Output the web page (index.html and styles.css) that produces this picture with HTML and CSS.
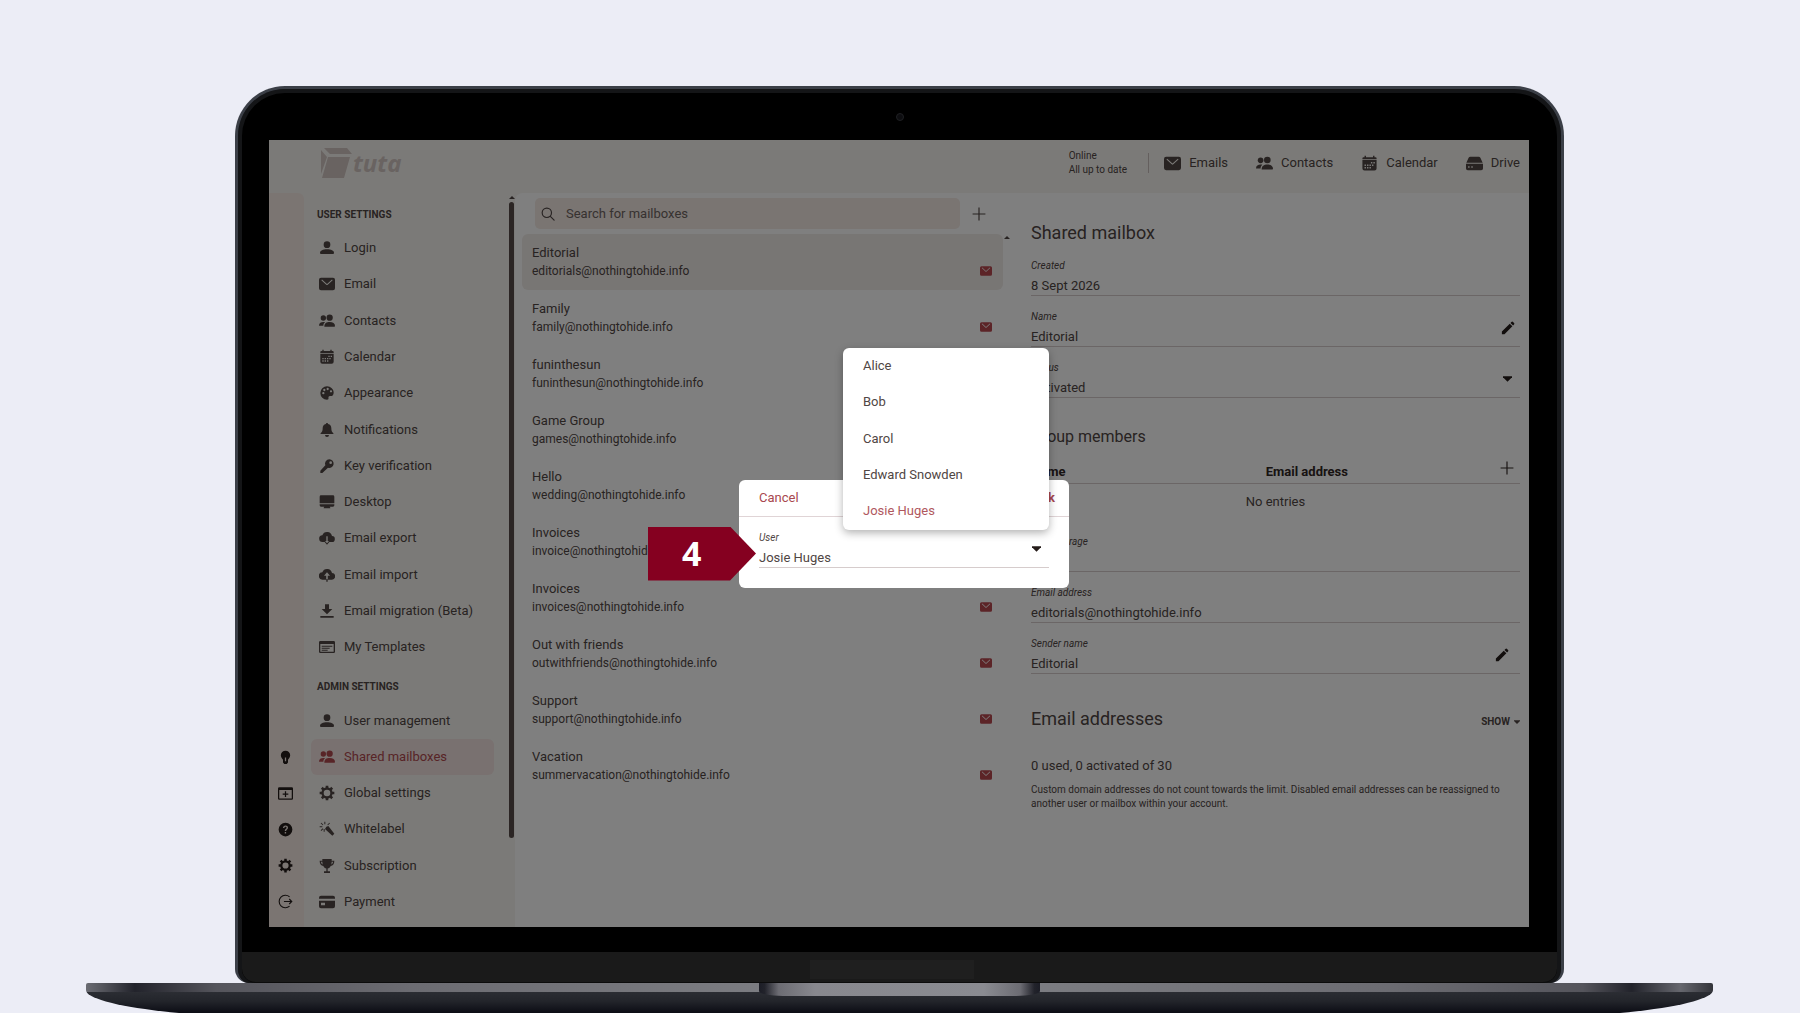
FILE: index.html
```
<!DOCTYPE html>
<html lang="en">
<head>
    <meta charset="utf-8">
    <title>Shared mailboxes</title>
    <link rel="stylesheet" href="styles.css">
</head>
<body>
    <!-- icon set -->
    <svg class="icon-defs" aria-hidden="true">
        <symbol id="i-person" viewBox="0 0 24 24"><circle cx="12" cy="7" r="5"/><path d="M1.500 19.500c0-3.500 4.500-5.500 10.500-5.500s10.500 2 10.500 5.500c0 1-.5 1.500-1.500 1.500H3c-1 0-1.500-.5-1.500-1.500z"/></symbol>
        <symbol id="i-mail" viewBox="0 0 24 24"><path fill-rule="evenodd" d="M3 2.500h18a3 3 0 0 1 3 3v13a3 3 0 0 1-3 3H3a3 3 0 0 1-3-3v-13a3 3 0 0 1 3-3zM3.500 6.200l7.400 7a1.700 1.700 0 0 0 2.200 0l7.400-7-1-1L12 12 4.500 5.200z"/></symbol>
        <symbol id="i-people" viewBox="0 0 24 24"><circle cx="6.500" cy="7.500" r="4"/><path d="M0 19c0-4 3-5.500 6.500-5.500 1 0 2 .1 2.600.4C7.200 15.300 6.600 17 6.500 19z"/><circle cx="16" cy="7" r="4.700"/><path d="M8 20.500c0-5 3-7 8-7s8 2 8 6c0 .7-.4 1-1 1z"/></symbol>
        <symbol id="i-calendar" viewBox="0 0 24 24"><path fill-rule="evenodd" d="M5 3V1h2v2h10V1h2v2h1.500A1.500 1.500 0 0 1 22 4.500V6H2V4.500A1.500 1.500 0 0 1 3.500 3zM2 7h20V19a3 3 0 0 1-3 3H5a3 3 0 0 1-3-3zM14 10v2h2v-2zm3.500 0v2h2v-2zM5 13.500v2h2v-2zm3.500 0v2h2v-2zm3.500 0v2h2v-2zm3.500 0v2h2v-2zM5 17v2h2v-2zm3.500 0v2h2v-2zm3.500 0v2h2v-2z"/></symbol>
        <symbol id="i-palette" viewBox="0 0 24 24"><path fill-rule="evenodd" d="M12 2a10 10 0 0 0 0 20c2 0 2.500-1 2.200-2.500-.3-2 .8-3.200 2.600-3 2 .3 4.500.5 5.200-4.500C22.300 6.500 17.500 2 12 2zM6.500 10.500a1.700 1.700 0 1 1 0 3.400 1.700 1.700 0 0 1 0-3.400zM8 5.800A1.700 1.700 0 1 1 8 9.200a1.700 1.700 0 0 1 0-3.400zm5-1.500a1.700 1.700 0 1 1 0 3.400 1.700 1.700 0 0 1 0-3.400zm5 3.500a1.700 1.700 0 1 1 0 3.400 1.700 1.700 0 0 1 0-3.400z"/></symbol>
        <symbol id="i-bell" viewBox="0 0 24 24"><path d="M12 1.500c-1 0-1.600.7-1.600 1.600C7 3.800 5.500 6.500 5.500 9.500c0 4-1 5.500-2.800 7-.7.600-.4 1.500.5 1.500h17.600c.9 0 1.200-.9.500-1.500-1.800-1.500-2.800-3-2.800-7 0-3-1.500-5.700-4.900-6.400 0-.9-.6-1.600-1.600-1.600zM9 19.500h6a3 3 0 0 1-6 0z"/></symbol>
        <symbol id="i-key" viewBox="0 0 24 24"><path fill-rule="evenodd" d="M15.500 2a6.500 6.500 0 1 1-2 12.700L5 22.500H2V19l7.500-8A6.500 6.500 0 0 1 15.500 2zm2 3a2 2 0 1 0 0 4 2 2 0 0 0 0-4z"/></symbol>
        <symbol id="i-desktop" viewBox="0 0 24 24"><path d="M3 2h18a2 2 0 0 1 2 2v10H1V4a2 2 0 0 1 2-2zM1 15.500h22V17a2 2 0 0 1-2 2h-5l1 1.500v1H7v-1L8 19H3a2 2 0 0 1-2-2z"/></symbol>
        <symbol id="i-cloud-down" viewBox="0 0 24 24"><path fill-rule="evenodd" d="M19.500 9A7.500 7.500 0 0 0 5 8a5 5 0 0 0 .5 10h3l3.500 4 3.500-4H19a4.500 4.500 0 0 0 .5-9zM11 9.500h2v7h2L12 20l-3-3.500h2z"/></symbol>
        <symbol id="i-cloud-up" viewBox="0 0 24 24"><path fill-rule="evenodd" d="M19.500 9A7.500 7.500 0 0 0 5 8a5 5 0 0 0 .5 11h5.300v-6H7.500L12 8l4.500 5h-3.300v6H19a5 5 0 0 0 .5-10z"/><path d="M11 18h2v4h-2z"/></symbol>
        <symbol id="i-download" viewBox="0 0 24 24"><path d="M9 2h6v7h5l-8 8-8-8h5zM2 19.500h20V22H2z"/></symbol>
        <symbol id="i-template" viewBox="0 0 24 24"><path fill-rule="evenodd" d="M2 3h20a2 2 0 0 1 2 2v14a2 2 0 0 1-2 2H2a2 2 0 0 1-2-2V5a2 2 0 0 1 2-2zm0 4.500V19h20V7.500z"/><path d="M4 10h16v1.500H4zM4 13h12v1.500H4zM4 16h9v1.500H4z"/></symbol>
        <symbol id="i-gear" viewBox="0 0 24 24"><circle cx="12" cy="12" r="6.700" fill="none" stroke="currentColor" stroke-width="3.500"/><path d="M10 1h4v4h-4zM10 19h4v4h-4zM1 10h4v4H1zM19 10h4v4h-4zM5.600 2.800l2.800 2.800-2.800 2.800-2.800-2.800zM18.400 2.800l2.800 2.800-2.800 2.800-2.800-2.800zM5.600 15.600l2.800 2.800-2.800 2.800-2.800-2.800zM18.400 15.600l2.800 2.800-2.800 2.800-2.800-2.800z"/></symbol>
        <symbol id="i-wand" viewBox="0 0 24 24"><path d="M11 8.500l3-1 9 11.500-3 3L9 12zM8 1h1.500v4H8zM1 8h4v1.500H1zM2.500 3.500l1-1 3 3-1 1zM12.500 5.500l3-3 1 1-3 3zM2.500 14l3-3 1 1-3 3zM7 12h1.500v4H7z"/></symbol>
        <symbol id="i-trophy" viewBox="0 0 24 24"><path fill-rule="evenodd" d="M5 1.500h14V4h4c0 5-2 7.500-5.500 8-1 2-2.500 3.300-4.500 3.700V20h3.500v2.500h-9V20H11v-4.300c-2-.4-3.500-1.700-4.500-3.700C3 11.500 1 9 1 4h4zM3 5.800c.2 2 1 3.300 2.600 3.900C5.200 8.500 5 7.300 5 5.800zm18 0h-2c0 1.500-.2 2.700-.6 3.900 1.600-.6 2.400-1.900 2.600-3.900z"/></symbol>
        <symbol id="i-card" viewBox="0 0 24 24"><path fill-rule="evenodd" d="M3 2.500h18a3 3 0 0 1 3 3V7H0V5.500a3 3 0 0 1 3-3zM0 10h24v8.500a3 3 0 0 1-3 3H3a3 3 0 0 1-3-3zm3 3v4h6v-4z"/></symbol>
        <symbol id="i-bulb" viewBox="0 0 24 24"><path fill-rule="evenodd" d="M12 1a7.500 7.500 0 0 0-7.500 7.500c0 3.300 2 4.700 3.500 7V20l2 2.500h4l2-2.500v-4.500c1.500-2.300 3.500-3.700 3.500-7A7.500 7.500 0 0 0 12 1zM11 12h2v6h-2z"/></symbol>
        <symbol id="i-window-plus" viewBox="0 0 24 24"><path fill-rule="evenodd" d="M2 2h20a2 2 0 0 1 2 2v16a2 2 0 0 1-2 2H2a2 2 0 0 1-2-2V4a2 2 0 0 1 2-2zm0 4.500V20h20V6.500z"/><path d="M11 8.500h2V12h3.500v2H13v3.500h-2V14H7.500v-2H11z"/></symbol>
        <symbol id="i-help" viewBox="0 0 24 24"><path fill-rule="evenodd" d="M12 1a11 11 0 1 0 0 22 11 11 0 0 0 0-22zM8 9.500C8 7 9.700 5.500 12 5.500s4 1.400 4 3.700c0 3-3 3.200-3 5.300h-2.200c0-3.300 2.900-3.500 2.900-5.200 0-1-.7-1.600-1.700-1.600s-1.800.7-1.800 1.800zm2.800 6.500H13v2.300h-2.200z"/></symbol>
        <symbol id="i-logout" viewBox="0 0 24 24"><path fill="none" stroke="currentColor" stroke-width="1.800" d="M18.500 4.500a10 10 0 1 0 0 15M9.500 12H22M18 8l4 4-4 4"/></symbol>
        <symbol id="i-search" viewBox="0 0 24 24"><path fill="none" stroke="currentColor" stroke-width="2" stroke-linecap="round" d="M10 2a8 8 0 1 1 0 16 8 8 0 0 1 0-16zM16 16l6.500 6.500"/></symbol>
        <symbol id="i-plus" viewBox="0 0 24 24"><path d="M11 1h2v10h10v2H13v10h-2V13H1v-2h10z"/></symbol>
        <symbol id="i-pencil" viewBox="0 0 24 24"><path d="M1.500 18L15 4.500 19.500 9 6 22.500H1.500zM16.200 3.300l1.600-1.600a2 2 0 0 1 2.900 0l1.600 1.600a2 2 0 0 1 0 2.900l-1.600 1.600z"/></symbol>
        <symbol id="i-caret" viewBox="0 0 8 5"><path d="M0 0h8v1L4 5 0 1z"/></symbol>
        <symbol id="i-drive" viewBox="0 0 24 24"><path fill-rule="evenodd" d="M6 2.500h12c1 0 1.700.5 2.300 1.300L23.500 11H.5l3.200-7.200C4.300 3 5 2.500 6 2.500zM0 12.500h24V19a2.500 2.500 0 0 1-2.500 2.500h-19A2.500 2.500 0 0 1 0 19zm3 3.500v2h2v-2zm4.500 0v2h2v-2z"/></symbol>
    </svg>

    <div class="laptop-lid">
        <span class="camera"></span>

        <div class="screen">
            <header class="topbar">
                <a class="brand" href="#" aria-label="tuta">
                    <svg viewBox="0 0 30 30"><path d="M3 0h23l5 6H9zM0 2l6 7-6 17zM7 9h22l-6 21H1z"/></svg>
                    <span>tuta</span>
                </a>
                <p class="sync-status">Online<br>All up to date</p>
                <nav class="main-nav">
                    <a href="#"><svg class="icon"><use href="#i-mail"/></svg>Emails</a>
                    <a href="#"><svg class="icon"><use href="#i-people"/></svg>Contacts</a>
                    <a href="#"><svg class="icon"><use href="#i-calendar"/></svg>Calendar</a>
                    <a href="#"><svg class="icon"><use href="#i-drive"/></svg>Drive</a>
                </nav>
            </header>

            <div class="columns">
                <div class="rail">
                    <button aria-label="News"><svg class="icon"><use href="#i-bulb"/></svg></button>
                    <button aria-label="New window"><svg class="icon"><use href="#i-window-plus"/></svg></button>
                    <button aria-label="Support"><svg class="icon"><use href="#i-help"/></svg></button>
                    <button aria-label="Settings"><svg class="icon"><use href="#i-gear"/></svg></button>
                    <button aria-label="Logout"><svg class="icon"><use href="#i-logout"/></svg></button>
                </div>

                <div class="sidebar">
                    <nav class="settings-nav">
                        <h2>USER SETTINGS</h2>
                        <a href="#"><svg class="icon"><use href="#i-person"/></svg>Login</a>
                        <a href="#"><svg class="icon"><use href="#i-mail"/></svg>Email</a>
                        <a href="#"><svg class="icon"><use href="#i-people"/></svg>Contacts</a>
                        <a href="#"><svg class="icon"><use href="#i-calendar"/></svg>Calendar</a>
                        <a href="#"><svg class="icon"><use href="#i-palette"/></svg>Appearance</a>
                        <a href="#"><svg class="icon"><use href="#i-bell"/></svg>Notifications</a>
                        <a href="#"><svg class="icon"><use href="#i-key"/></svg>Key verification</a>
                        <a href="#"><svg class="icon"><use href="#i-desktop"/></svg>Desktop</a>
                        <a href="#"><svg class="icon"><use href="#i-cloud-down"/></svg>Email export</a>
                        <a href="#"><svg class="icon"><use href="#i-cloud-up"/></svg>Email import</a>
                        <a href="#"><svg class="icon"><use href="#i-download"/></svg>Email migration (Beta)</a>
                        <a href="#"><svg class="icon"><use href="#i-template"/></svg>My Templates</a>
                        <h2>ADMIN SETTINGS</h2>
                        <a href="#"><svg class="icon"><use href="#i-person"/></svg>User management</a>
                        <a href="#" class="active"><svg class="icon"><use href="#i-people"/></svg>Shared mailboxes</a>
                        <a href="#"><svg class="icon"><use href="#i-gear"/></svg>Global settings</a>
                        <a href="#"><svg class="icon"><use href="#i-wand"/></svg>Whitelabel</a>
                        <a href="#"><svg class="icon"><use href="#i-trophy"/></svg>Subscription</a>
                        <a href="#"><svg class="icon"><use href="#i-card"/></svg>Payment</a>
                    </nav>
                    <div class="scrollbar"><span class="scroll-up"></span><span class="scroll-thumb"></span></div>
                </div>

                <main class="content">
                    <section class="mailboxes">
                        <div class="search-bar">
                            <label class="search-box">
                                <svg class="icon"><use href="#i-search"/></svg>
                                <input type="text" placeholder="Search for mailboxes" aria-label="Search for mailboxes">
                            </label>
                            <button aria-label="Add mailbox"><svg class="icon"><use href="#i-plus"/></svg></button>
                        </div>
                        <span class="scroll-up list-scroll-up"></span>
                        <ul class="mailbox-list">
                            <li class="selected"><div><h3>Editorial</h3><p>editorials@nothingtohide.info</p></div><svg class="icon"><use href="#i-mail"/></svg></li>
                            <li><div><h3>Family</h3><p>family@nothingtohide.info</p></div><svg class="icon"><use href="#i-mail"/></svg></li>
                            <li><div><h3>funinthesun</h3><p>funinthesun@nothingtohide.info</p></div><svg class="icon"><use href="#i-mail"/></svg></li>
                            <li><div><h3>Game Group</h3><p>games@nothingtohide.info</p></div><svg class="icon"><use href="#i-mail"/></svg></li>
                            <li><div><h3>Hello</h3><p>wedding@nothingtohide.info</p></div><svg class="icon"><use href="#i-mail"/></svg></li>
                            <li><div><h3>Invoices</h3><p>invoice@nothingtohide.info</p></div><svg class="icon"><use href="#i-mail"/></svg></li>
                            <li><div><h3>Invoices</h3><p>invoices@nothingtohide.info</p></div><svg class="icon"><use href="#i-mail"/></svg></li>
                            <li><div><h3>Out with friends</h3><p>outwithfriends@nothingtohide.info</p></div><svg class="icon"><use href="#i-mail"/></svg></li>
                            <li><div><h3>Support</h3><p>support@nothingtohide.info</p></div><svg class="icon"><use href="#i-mail"/></svg></li>
                            <li><div><h3>Vacation</h3><p>summervacation@nothingtohide.info</p></div><svg class="icon"><use href="#i-mail"/></svg></li>
                        </ul>
                    </section>

                    <section class="details">
                        <h2>Shared mailbox</h2>
                        <div class="field">
                            <label for="created">Created</label>
                            <input type="text" id="created" value="8 Sept 2026" readonly>
                        </div>
                        <div class="field">
                            <label for="name">Name</label>
                            <input type="text" id="name" value="Editorial" readonly>
                            <button aria-label="Edit name"><svg class="icon"><use href="#i-pencil"/></svg></button>
                        </div>
                        <div class="field">
                            <label for="status">Status</label>
                            <select id="status"><option>Activated</option></select>
                            <svg class="caret"><use href="#i-caret"/></svg>
                        </div>

                        <h3>Group members</h3>
                        <table>
                            <thead>
                                <tr>
                                    <th>Name</th>
                                    <th>Email address</th>
                                    <th><button aria-label="Add member"><svg class="icon"><use href="#i-plus"/></svg></button></th>
                                </tr>
                            </thead>
                            <tbody>
                                <tr><td colspan="3">No entries</td></tr>
                            </tbody>
                        </table>

                        <div class="field">
                            <label for="storage">Used storage</label>
                            <input type="text" id="storage" value="" readonly>
                        </div>
                        <div class="field">
                            <label for="address">Email address</label>
                            <input type="text" id="address" value="editorials@nothingtohide.info" readonly>
                        </div>
                        <div class="field sender">
                            <label for="sender">Sender name</label>
                            <input type="text" id="sender" value="Editorial" readonly>
                            <button aria-label="Edit sender name"><svg class="icon"><use href="#i-pencil"/></svg></button>
                        </div>

                        <div class="section-head">
                            <h2>Email addresses</h2>
                            <button>SHOW <svg class="caret-small"><use href="#i-caret"/></svg></button>
                        </div>
                        <p class="usage">0 used, 0 activated of 30</p>
                        <p class="hint">Custom domain addresses do not count towards the limit. Disabled email addresses can be reassigned to another user or mailbox within your account.</p>
                    </section>
                </main>
            </div>

            <div class="modal-layer">
                <form class="dialog">
                    <div class="dialog-head">
                        <button type="button">Cancel</button>
                        <button type="button" class="ok">Ok</button>
                    </div>
                    <div class="dialog-body">
                        <div class="field">
                            <label for="user">User</label>
                            <select id="user"><option>Josie Huges</option></select>
                            <svg class="caret"><use href="#i-caret"/></svg>
                        </div>
                    </div>
                    <div class="dropdown">
                        <button type="button">Alice</button>
                        <button type="button">Bob</button>
                        <button type="button">Carol</button>
                        <button type="button">Edward Snowden</button>
                        <button type="button" class="current">Josie Huges</button>
                    </div>
                    <span class="step">4</span>
                </form>
            </div>
        </div>

        <div class="chin"><span></span></div>
    </div>
    <div class="laptop-base"><span class="notch"></span></div>
</body>
</html>
```
FILE: styles.css
```
* {
    box-sizing: border-box;
}

body {
    margin: 0;
    height: 100vh;
    min-height: 900px;
    padding-top: 86px;
    display: flex;
    flex-direction: column;
    overflow: hidden;
    background-color: #ecedf6;
    font-family: Roboto, "Noto Sans", sans-serif;
    font-size: 13px;
    line-height: 20px;
    color: #504644;
}

h2, h3, p, ul {
    margin: 0;
    padding: 0;
    font-weight: 400;
}

button {
    padding: 0;
    border: none;
    background: none;
    font: inherit;
    color: inherit;
    cursor: pointer;
}

a {
    color: inherit;
    text-decoration: none;
}

.icon-defs {
    display: none;
}

.icon {
    width: 16px;
    height: 16px;
    flex-shrink: 0;
    fill: currentColor;
}

/* laptop */
.laptop-lid {
    flex: 1;
    margin: 0 236px 0 235px;
    display: flex;
    flex-direction: column;
    position: relative;
    border: 3px solid #3b3f47;
    border-bottom: none;
    border-radius: 50px 50px 14px 14px;
    background-color: #000;
    box-shadow: inset 0 0 0 4px #141517;
}

.camera {
    position: absolute;
    top: 24px;
    left: 50%;
    width: 8px;
    height: 8px;
    margin-left: -4px;
    border-radius: 50%;
    border: 1px solid #1f2023;
    background-color: #0d0d10;
}

.chin {
    height: 31px;
    margin: 25px 4px 0;
    padding-top: 8px;
    background-color: #1a1a1a;
    border-bottom: 1px solid #0c0c0c;
    border-radius: 0 0 14px 14px;
}

.chin span {
    display: block;
    width: 164px;
    height: 19px;
    margin-left: calc(50% - 90px);
    background-color: #1f1f1f;
}

.laptop-base {
    height: 37px;
    margin: 0 87px -7px 86px;
    flex-shrink: 0;
    border-radius: 2px 2px 260px 260px / 2px 2px 30px 30px;
    background:
        linear-gradient(90deg, #6a6b72, #55565d 1%, #22232b 3%, #55555c 8%, #6c6c72 20%, #7e7f84 45%, #7e7f84 55%, #6c6c72 80%, #55555c 92%, #22232b 95%, #66676e 98%, #33343a) 0 0 / 100% 9px no-repeat,
        linear-gradient(#2b2d33 9px, #23252b 18px, #0b0c14 30px);
}

.notch {
    display: block;
    width: 281px;
    height: 13px;
    margin: 0 auto;
    border-radius: 0 0 24px 24px / 0 0 5px 5px;
    background: linear-gradient(90deg, #1c1d26, #22232b 2%, #6c6c73 7%, #88888e 20%, #8a8b91 80%, #6c6c73 93%, #22232b 98%, #1c1d26);
}

/* screen */
.screen {
    flex: 1;
    margin: 51px 32px 0 31px;
    display: flex;
    flex-direction: column;
    position: relative;
    overflow: hidden;
    background-color: #f7f5f0;
}

.topbar {
    height: 53px;
    display: flex;
    align-items: center;
    padding: 0 9px 7px 52px;
}

.brand {
    display: flex;
    align-items: center;
    gap: 2px;
    margin-right: auto;
    color: #d2c6c3;
    font: italic 700 24px/30px "Noto Sans", sans-serif;
}

.brand svg {
    width: 30px;
    height: 30px;
    fill: currentColor;
    overflow: visible;
}

.sync-status {
    font-size: 10px;
    line-height: 14px;
}

.main-nav {
    display: flex;
    gap: 28px;
    margin-left: 21px;
    padding-left: 15px;
    border-left: 1px solid #c9bfbc;
    line-height: 20px;
}

.main-nav a {
    display: flex;
    align-items: center;
    gap: 8px;
}

.main-nav .icon {
    width: 17px;
    height: 17px;
}

.columns {
    flex: 1;
    display: flex;
}

.rail {
    width: 35px;
    padding: 0 2px 8px 0;
    display: flex;
    flex-direction: column;
    justify-content: flex-end;
    border-radius: 0 6px 0 0;
    background-color: #f6ebe5;
    color: #251c1a;
}

.rail button {
    height: 36px;
    display: flex;
    align-items: center;
    justify-content: center;
}

.rail .icon {
    width: 15px;
    height: 15px;
}

.sidebar {
    width: 211px;
    display: flex;
}

.settings-nav {
    flex: 1;
    margin: 0 15px 0 7px;
    padding-bottom: 7px;
    display: flex;
    flex-direction: column;
}

.settings-nav h2 {
    height: 37px;
    padding: 7px 0 0 6px;
    font-size: 10px;
    line-height: 30px;
    font-weight: 700;
}

.settings-nav a {
    flex: 1;
    display: flex;
    align-items: center;
    gap: 9px;
    padding-left: 8px;
    border-radius: 6px;
    white-space: nowrap;
}

.settings-nav .active {
    background-color: #f2e2e0;
    color: #b0494e;
}

.scrollbar {
    width: 6px;
    padding-top: 3px;
}

.scroll-up {
    display: block;
    width: 6px;
    height: 3px;
    background-color: #504644;
    clip-path: polygon(50% 0, 100% 100%, 0 100%);
}

.scroll-thumb {
    display: block;
    width: 5px;
    height: 87%;
    margin-top: 3px;
    border-radius: 3px;
    background-color: #564a48;
}

.content {
    flex: 1;
    display: flex;
    border-radius: 8px 0 0 0;
    background-color: #fff;
}

/* mailbox list */
.mailboxes {
    flex: 0 0 488px;
    padding: 5px 0 0 7px;
    position: relative;
}

.search-bar {
    display: flex;
    align-items: center;
    gap: 12px;
    margin: 0 17px 5px 13px;
}

.search-box {
    flex: 1;
    height: 31px;
    display: flex;
    align-items: center;
    gap: 11px;
    padding: 0 6px;
    border-radius: 5px;
    background-color: #f4eae5;
}

.search-box .icon, .search-bar button .icon {
    width: 14px;
    height: 14px;
}

.search-bar button, .field button, th button {
    display: flex;
}

.search-box input {
    flex: 1;
    padding: 0;
    border: none;
    outline: none;
    background: none;
    font: inherit;
    color: inherit;
}

.search-box input::placeholder {
    color: #6e6461;
}

.list-scroll-up {
    position: absolute;
    top: 43px;
    right: -7px;
}

.mailbox-list {
    list-style: none;
}

.mailbox-list li {
    height: 56px;
    display: flex;
    align-items: center;
    justify-content: space-between;
    padding: 0 11px 0 10px;
    border-radius: 6px;
}

.mailbox-list .selected {
    background-color: #f1ece9;
}

.mailbox-list h3 {
    font-size: 13px;
    line-height: 19px;
}

.mailbox-list p {
    font-size: 12px;
    line-height: 19px;
}

.mailbox-list .icon {
    width: 12px;
    height: 12px;
    margin-top: 18px;
    color: #b8484f;
}

/* details */
.details {
    flex: 1;
    padding: 27px 9px 0 28px;
}

.details h2 {
    font-size: 18px;
    line-height: 25px;
}

.details h3 {
    margin: 27px 0 12px;
    font-size: 16px;
    line-height: 24px;
}

.field {
    height: 51px;
    padding-top: 14px;
    position: relative;
    border-bottom: 1px solid #d6cccc;
}

.field label {
    display: block;
    font-size: 10px;
    line-height: 14px;
    font-style: italic;
}

.field input, .field select {
    display: block;
    width: 100%;
    height: 20px;
    margin-top: 3px;
    padding: 0;
    border: none;
    outline: none;
    appearance: none;
    background: none;
    font: inherit;
    color: inherit;
}

.field button {
    position: absolute;
    right: 5px;
    top: 25px;
    color: #251c1a;
}

.field.sender button {
    right: 11px;
}

.field button .icon, th button .icon {
    width: 14px;
    height: 14px;
}

.caret {
    position: absolute;
    right: 8px;
    top: 29px;
    width: 9px;
    height: 6px;
    fill: #251c1a;
}

table {
    width: 100%;
    border-collapse: collapse;
}

th {
    height: 21px;
    padding: 0;
    text-align: left;
    color: #302624;
    border-bottom: 1px solid #d6cccc;
}

th:first-child {
    width: 48%;
}

th:last-child {
    width: 20px;
    padding: 0 6px 8px 0;
}

td {
    height: 37px;
    padding: 0;
    text-align: center;
}

.section-head {
    display: flex;
    justify-content: space-between;
    align-items: center;
    margin-top: 32px;
}

.section-head button {
    display: flex;
    align-items: center;
    gap: 4px;
    padding-top: 6px;
    font-size: 10px;
    font-weight: 700;
}

.caret-small {
    width: 6px;
    height: 4px;
    fill: currentColor;
}

.usage {
    margin-top: 24px;
}

.hint {
    margin-top: 7px;
    font-size: 10px;
    line-height: 14px;
}

/* dialog */
.modal-layer {
    position: absolute;
    inset: 0;
    display: grid;
    place-items: center;
    padding-left: 10px;
    background-color: rgba(0, 0, 0, 0.5);
}

.dialog {
    width: 330px;
    position: relative;
    border-radius: 6px;
    background-color: #fff;
}

.dialog-head {
    height: 37px;
    display: flex;
    justify-content: space-between;
    align-items: center;
    padding: 0 14px 0 20px;
    border-bottom: 1px solid #e0d4d6;
    color: #a8484f;
}

.dialog-head .ok {
    font-weight: 700;
}

.dialog-body {
    padding: 0 20px 20px;
}

.dropdown {
    position: absolute;
    right: 20px;
    bottom: 58px;
    width: 206px;
    height: 182px;
    display: flex;
    flex-direction: column;
    border-radius: 6px;
    background-color: #fff;
    box-shadow: 0 3px 8px rgba(0, 0, 0, 0.3);
}

.dropdown button {
    flex: 1;
    padding-left: 20px;
    text-align: left;
}

.dropdown .current {
    color: #b0585e;
}

.step {
    position: absolute;
    left: -91px;
    top: 47px;
    width: 108px;
    height: 54px;
    padding-left: 34px;
    background-color: #850020;
    clip-path: polygon(0 0, 76% 0, 100% 50%, 76% 100%, 0 100%);
    color: #fff;
    font: 700 34px/53px "Noto Sans", sans-serif;
}
```
